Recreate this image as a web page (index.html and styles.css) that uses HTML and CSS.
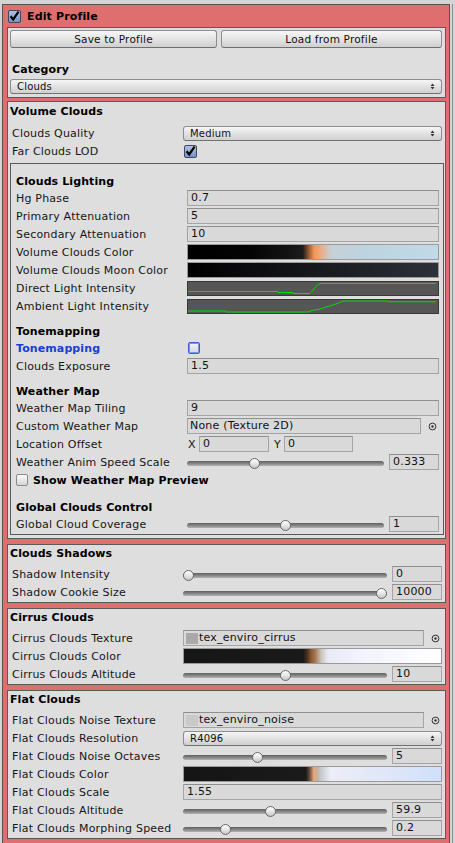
FILE: index.html
```html
<!DOCTYPE html>
<html>
<head>
<meta charset="utf-8">
<title>Edit Profile</title>
<link rel="stylesheet" href="styles.css">
</head>
<body>
<div class="page">
  <div class="panel">
    <div class="panel-head">
      <span class="check on"><svg width="13" height="13" viewBox="0 0 13 13"><path d="M2.6 6.2 L5.2 9.4 L10.6 1.6" fill="none" stroke="#000" stroke-width="2.2"/></svg></span>
      <span class="panel-title">Edit Profile</span>
    </div>

    <div class="box box-top">
      <div class="btn-row">
        <button class="btn btn-save">Save to Profile</button>
        <button class="btn btn-load">Load from Profile</button>
      </div>
      <div class="cat-label">Category</div>
      <div class="popup">Clouds<svg class="arrows" width="5" height="7" viewBox="0 0 5 7"><path d="M0.5 3 L2.5 0.5 L4.5 3 Z M0.5 4 L2.5 6.5 L4.5 4 Z" fill="#333"/></svg></div>
    </div>

    <div class="box box-volume">
      <div class="box-title">Volume Clouds</div>
      <div class="row">
        <span class="lbl">Clouds Quality</span>
        <div class="ctrl"><div class="popup">Medium<svg class="arrows" width="5" height="7" viewBox="0 0 5 7"><path d="M0.5 3 L2.5 0.5 L4.5 3 Z M0.5 4 L2.5 6.5 L4.5 4 Z" fill="#333"/></svg></div></div>
      </div>
      <div class="row">
        <span class="lbl">Far Clouds LOD</span>
        <div class="ctrl"><span class="check on cb-offset"><svg width="13" height="13" viewBox="0 0 13 13"><path d="M2.6 6.2 L5.2 9.4 L10.6 1.6" fill="none" stroke="#000" stroke-width="2.2"/></svg></span></div>
      </div>

      <div class="inner">
        <div class="sub sub-first">Clouds Lighting</div>
        <div class="row">
          <span class="lbl">Hg Phase</span>
          <div class="ctrl"><div class="field">0.7</div></div>
        </div>
        <div class="row">
          <span class="lbl">Primary Attenuation</span>
          <div class="ctrl"><div class="field">5</div></div>
        </div>
        <div class="row">
          <span class="lbl">Secondary Attenuation</span>
          <div class="ctrl"><div class="field">10</div></div>
        </div>
        <div class="row">
          <span class="lbl">Volume Clouds Color</span>
          <div class="ctrl"><div class="grad grad-volume"></div></div>
        </div>
        <div class="row">
          <span class="lbl">Volume Clouds Moon Color</span>
          <div class="ctrl"><div class="grad grad-moon"></div></div>
        </div>
        <div class="row">
          <span class="lbl">Direct Light Intensity</span>
          <div class="ctrl"><div class="curve"><svg width="248" height="13" viewBox="0 0 248 13"><polyline points="0,9.5 90,9.5 90,10.5 105,10.5 105,11.5 122,11.5 124,9.5 126,7 128,4.5 130,2.5 132,1.5 248,1.5" fill="none" stroke="#00e000" stroke-width="1"/></svg></div></div>
        </div>
        <div class="row">
          <span class="lbl">Ambient Light Intensity</span>
          <div class="ctrl"><div class="curve"><svg width="248" height="13" viewBox="0 0 248 13"><polyline points="0,11 38,11 38,12 120,12 124,10.5 132,9 140,6.5 148,4 155,1 200,1 200,1.8 248,1.8" fill="none" stroke="#00e000" stroke-width="1"/></svg></div></div>
        </div>

        <div class="sub">Tonemapping</div>
        <div class="row">
          <span class="lbl lbl-blue">Tonemapping</span>
          <div class="ctrl"><span class="check focus cb-offset"></span></div>
        </div>
        <div class="row">
          <span class="lbl">Clouds Exposure</span>
          <div class="ctrl"><div class="field">1.5</div></div>
        </div>

        <div class="sub">Weather Map</div>
        <div class="row">
          <span class="lbl">Weather Map Tiling</span>
          <div class="ctrl"><div class="field">9</div></div>
        </div>
        <div class="row">
          <span class="lbl">Custom Weather Map</span>
          <div class="ctrl">
            <div class="field objfield">None (Texture 2D)</div>
            <span class="picker"><svg width="9" height="9" viewBox="0 0 9 9"><circle cx="4.5" cy="4.5" r="3.4" fill="none" stroke="#333" stroke-width="1"/><circle cx="4.5" cy="4.5" r="1.2" fill="#333"/></svg></span>
          </div>
        </div>
        <div class="row">
          <span class="lbl">Location Offset</span>
          <div class="ctrl">
            <span class="axis axis-x">X</span><div class="field field-x">0</div>
            <span class="axis axis-y">Y</span><div class="field field-y">0</div>
          </div>
        </div>
        <div class="row">
          <span class="lbl">Weather Anim Speed Scale</span>
          <div class="ctrl">
            <div class="slider"><span class="track"></span><span class="thumb" style="--v:0.333"></span></div>
            <div class="field num">0.333</div>
          </div>
        </div>
        <div class="row toggle-row">
          <span class="check off small"></span>
          <span class="toggle-text">Show Weather Map Preview</span>
        </div>

        <div class="sub sub-wide">Global Clouds Control</div>
        <div class="row">
          <span class="lbl">Global Cloud Coverage</span>
          <div class="ctrl">
            <div class="slider"><span class="track"></span><span class="thumb" style="--v:0.5"></span></div>
            <div class="field num">1</div>
          </div>
        </div>
      </div>
    </div>

    <div class="box">
      <div class="box-title">Clouds Shadows</div>
      <div class="row">
        <span class="lbl">Shadow Intensity</span>
        <div class="ctrl">
          <div class="slider"><span class="track"></span><span class="thumb" style="--v:0"></span></div>
          <div class="field num">0</div>
        </div>
      </div>
      <div class="row">
        <span class="lbl">Shadow Cookie Size</span>
        <div class="ctrl">
          <div class="slider"><span class="track"></span><span class="thumb" style="--v:1"></span></div>
          <div class="field num">10000</div>
        </div>
      </div>
    </div>

    <div class="box">
      <div class="box-title">Cirrus Clouds</div>
      <div class="row">
        <span class="lbl">Cirrus Clouds Texture</span>
        <div class="ctrl">
          <div class="field objfield"><span class="thumbnail tn-cirrus"></span>tex_enviro_cirrus</div>
          <span class="picker"><svg width="9" height="9" viewBox="0 0 9 9"><circle cx="4.5" cy="4.5" r="3.4" fill="none" stroke="#333" stroke-width="1"/><circle cx="4.5" cy="4.5" r="1.2" fill="#333"/></svg></span>
        </div>
      </div>
      <div class="row">
        <span class="lbl">Cirrus Clouds Color</span>
        <div class="ctrl"><div class="grad grad-cirrus"></div></div>
      </div>
      <div class="row">
        <span class="lbl">Cirrus Clouds Altitude</span>
        <div class="ctrl">
          <div class="slider"><span class="track"></span><span class="thumb" style="--v:0.5"></span></div>
          <div class="field num">10</div>
        </div>
      </div>
    </div>

    <div class="box">
      <div class="box-title">Flat Clouds</div>
      <div class="row">
        <span class="lbl">Flat Clouds Noise Texture</span>
        <div class="ctrl">
          <div class="field objfield"><span class="thumbnail tn-noise"></span>tex_enviro_noise</div>
          <span class="picker"><svg width="9" height="9" viewBox="0 0 9 9"><circle cx="4.5" cy="4.5" r="3.4" fill="none" stroke="#333" stroke-width="1"/><circle cx="4.5" cy="4.5" r="1.2" fill="#333"/></svg></span>
        </div>
      </div>
      <div class="row">
        <span class="lbl">Flat Clouds Resolution</span>
        <div class="ctrl"><div class="popup">R4096<svg class="arrows" width="5" height="7" viewBox="0 0 5 7"><path d="M0.5 3 L2.5 0.5 L4.5 3 Z M0.5 4 L2.5 6.5 L4.5 4 Z" fill="#333"/></svg></div></div>
      </div>
      <div class="row">
        <span class="lbl">Flat Clouds Noise Octaves</span>
        <div class="ctrl">
          <div class="slider"><span class="track"></span><span class="thumb" style="--v:0.358"></span></div>
          <div class="field num">5</div>
        </div>
      </div>
      <div class="row">
        <span class="lbl">Flat Clouds Color</span>
        <div class="ctrl"><div class="grad grad-flat"></div></div>
      </div>
      <div class="row">
        <span class="lbl">Flat Clouds Scale</span>
        <div class="ctrl"><div class="field">1.55</div></div>
      </div>
      <div class="row">
        <span class="lbl">Flat Clouds Altitude</span>
        <div class="ctrl">
          <div class="slider"><span class="track"></span><span class="thumb" style="--v:0.426"></span></div>
          <div class="field num">59.9</div>
        </div>
      </div>
      <div class="row">
        <span class="lbl">Flat Clouds Morphing Speed</span>
        <div class="ctrl">
          <div class="slider"><span class="track"></span><span class="thumb" style="--v:0.19"></span></div>
          <div class="field num">0.2</div>
        </div>
      </div>
    </div>
  </div>
  <div class="scroll-edge"></div>
</div>
</body>
</html>
```

FILE: styles.css
```css
* {
  box-sizing: border-box;
}

html,
body {
  margin: 0;
  padding: 0;
}

body {
  width: 455px;
  height: 843px;
  overflow: hidden;
  background: #d4d4d4;
  font-family: "DejaVu Sans", Verdana, sans-serif;
  font-size: 11px;
  color: #161616;
}

.page {
  display: flex;
  height: 100%;
  padding: 4px 0 0 2px;
}

/* red foldout panel */
.panel {
  flex: none;
  width: 448px;
  min-height: 860px;
  background: #df6e6e;
  border: 1px solid #5e5050;
  padding: 0 3px 0 4px;
}

.scroll-edge {
  flex: none;
  width: 1px;
  margin-left: 2px;
  background: #8c8c8c;
}

.panel-head {
  display: flex;
  align-items: center;
  height: 22px;
  padding-left: 1px;
}

.panel-title {
  margin-left: 6px;
  font-weight: bold;
  font-size: 11px;
  letter-spacing: 0.15px;
  color: #000;
}

/* check boxes */
.check {
  flex: none;
  display: inline-block;
  position: relative;
  width: 13px;
  height: 13px;
  border-radius: 2px;
}

.check svg {
  position: absolute;
  left: -1px;
  top: -1px;
}

.check.on {
  border: 1px solid #3c4866;
  background: linear-gradient(#aec1e2, #7893c4);
}

.check.off {
  border: 1px solid #8a8a8a;
  background: linear-gradient(#fbfbfb, #d6d6d6);
}

.check.focus {
  width: 12px;
  height: 12px;
  border: 1px solid #3a5fd0;
  box-shadow: inset 0 0 0 1px #7d95dd;
  background: linear-gradient(#f1f2f8, #d3d7e3);
}

.check.small {
  width: 12px;
  height: 12px;
}

.cb-offset {
  margin-left: 1px;
}

/* grey group boxes */
.box {
  background: #dedede;
  border: 1px solid #5a5a5a;
  padding: 0 2px 1px 2px;
  margin-top: 5px;
}

.box-top {
  margin-top: 0;
  padding: 2px 3px 3px 2px;
}

.box-volume {
  margin-top: 3px;
  padding-bottom: 0;
}

.box-title {
  padding: 2px 0 4px;
  line-height: 14px;
  font-weight: bold;
  color: #000;
  letter-spacing: 0.1px;
}

.box-volume > .box-title {
  padding: 3px 0 5px;
}

.btn-row {
  display: flex;
  gap: 4px;
}

.btn {
  height: 18px;
  padding: 0;
  border: 1px solid #8d8d8d;
  border-bottom-color: #6e6e6e;
  border-radius: 3px;
  background: linear-gradient(#f7f7f7, #e4e4e4 50%, #cfcfcf);
  font-family: "DejaVu Sans", Verdana, sans-serif;
  font-size: 10.5px;
  letter-spacing: 0.2px;
  color: #111;
}

.btn-save {
  width: 207px;
}

.btn-load {
  width: 221px;
}

.cat-label {
  margin-top: 15px;
  padding-left: 2px;
  line-height: 14px;
  font-weight: bold;
  color: #000;
  letter-spacing: 0.1px;
}

.popup {
  position: relative;
  flex: 1;
  height: 15px;
  margin-top: 2px;
  padding-left: 6px;
  border: 1px solid #8e8e8e;
  border-bottom-color: #727272;
  border-radius: 3px;
  background: linear-gradient(#f6f6f6, #e2e2e2 50%, #d0d0d0);
  font-size: 10px;
  line-height: 13px;
  letter-spacing: 0.2px;
  color: #111;
}

.row .popup {
  margin-top: 0;
}

.arrows {
  position: absolute;
  right: 6px;
  top: 3px;
}

/* property rows */
.row {
  display: flex;
  align-items: center;
  height: 18px;
  padding-left: 2px;
  padding-right: 1px;
}

.lbl {
  flex: none;
  width: 171px;
  white-space: nowrap;
  overflow: hidden;
  letter-spacing: 0.2px;
  color: #161616;
}

.lbl-blue {
  color: #1640d6;
  font-weight: bold;
  letter-spacing: 0.1px;
}

.ctrl {
  flex: 1;
  min-width: 0;
  display: flex;
  align-items: center;
}

.inner {
  margin: 3px -1px 3px 0;
  border: 1px solid #5a5a5a;
  padding: 0 4px 1px 5px;
}

.inner .row {
  padding-left: 0;
  padding-right: 0;
}

.sub {
  margin-top: 10px;
  line-height: 14px;
  font-weight: bold;
  color: #000;
  letter-spacing: 0.1px;
}

.sub-first {
  margin-top: 11px;
}

.sub-wide {
  margin-top: 12px;
}

.field {
  flex: 1;
  min-width: 0;
  height: 16px;
  padding-left: 3px;
  border: 1px solid #a4a4a4;
  border-top-color: #8e8e8e;
  background: #d9d9d9;
  line-height: 14px;
  white-space: nowrap;
  overflow: hidden;
  letter-spacing: 0.2px;
  color: #111;
}

.objfield {
  display: flex;
  align-items: center;
  padding-left: 2px;
}

.picker {
  flex: none;
  width: 18px;
  display: flex;
  justify-content: flex-end;
  padding-right: 2px;
}

.thumbnail {
  flex: none;
  width: 12px;
  height: 11px;
  margin-right: 1px;
}

.tn-cirrus {
  background: #a9a9a9;
}

.tn-noise {
  background: #c9c9c9;
}

.axis {
  flex: none;
  letter-spacing: 0.2px;
}

.axis-x {
  width: 12px;
  padding-left: 1px;
}

.axis-y {
  width: 15px;
  padding-left: 5px;
}

.field-x {
  flex: none;
  width: 70px;
}

.field-y {
  flex: none;
  width: 69px;
}

.num {
  flex: none;
  width: 50px;
}

/* sliders */
.slider {
  position: relative;
  flex: 1;
  height: 18px;
  margin-right: 5px;
}

.track {
  position: absolute;
  left: 0;
  right: 0;
  top: 8px;
  height: 5px;
  border-radius: 3px;
  background: linear-gradient(#5f5f5f, #8e8e8e 60%, #b4b4b4);
}

.thumb {
  position: absolute;
  top: 5px;
  left: calc(var(--v) * (100% - 11px));
  width: 11px;
  height: 11px;
  border-radius: 50%;
  border: 1px solid #6a6a6a;
  background: linear-gradient(#ffffff, #e6e6e6 50%, #c6c6c6);
}

.toggle-row {
  padding-left: 0;
}

.toggle-text {
  margin-left: 5px;
  font-weight: bold;
  letter-spacing: 0.1px;
  color: #000;
}

/* colour gradients */
.grad {
  flex: 1;
  height: 16px;
  border: 1px solid #9a9a9a;
}

.grad-volume {
  background: linear-gradient(to right,
    #000000 0%, #040404 25%, #151515 42%, #1e1c1b 46%,
    #8a5230 48%, #f49656 50.5%, #f3a06a 52%, #e2b49a 54%,
    #c6d0d6 57.5%, #bdd3df 70%, #c1d9e8 100%);
}

.grad-moon {
  background: linear-gradient(to right, #000000 0%, #121316 40%, #2d3139 100%);
}

.grad-cirrus {
  background: linear-gradient(to right,
    #161616 0%, #1a1a1a 46.5%, #4a3322 48%, #8e5a30 49.5%,
    #a37550 51%, #cfc6c0 53.5%, #e8eaf5 56%, #f2f4ff 70%, #ffffff 100%);
}

.grad-flat {
  background: linear-gradient(to right,
    #151515 0%, #1a1a1a 47.5%, #6e5441 49%, #e6a878 50.5%,
    #c6b2a0 52%, #c9cbd3 53.5%, #eceef8 57%, #e2e8f8 75%, #cfe0fa 100%);
}

/* animation curves */
.curve {
  flex: 1;
  height: 15px;
  border: 1px solid #393939;
  background: #565656;
  overflow: hidden;
}

.curve svg {
  display: block;
}
```
